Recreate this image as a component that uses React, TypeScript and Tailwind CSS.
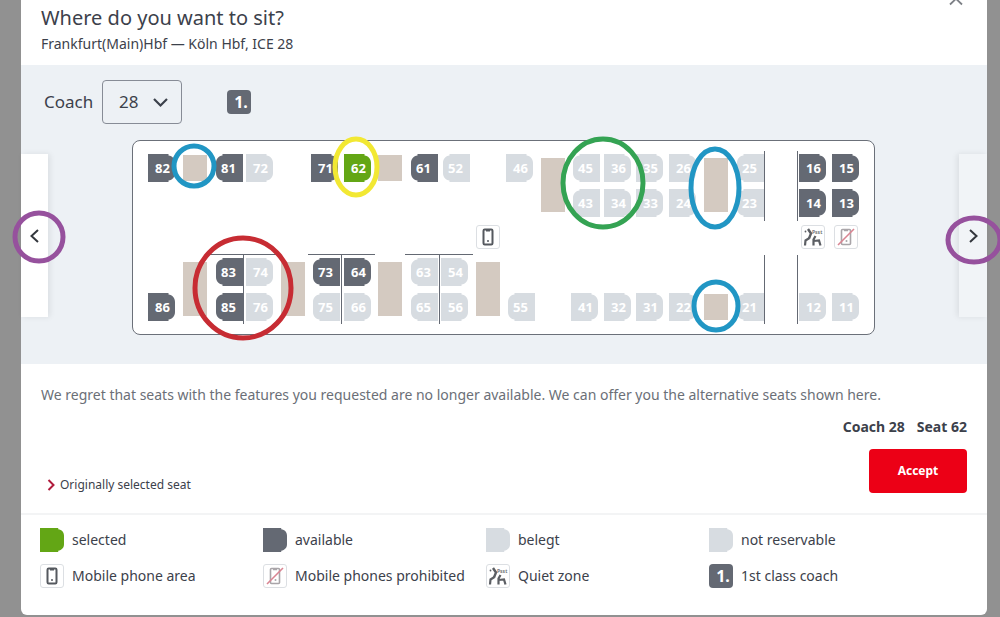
import React from "react";

type Status = "available" | "selected" | "taken";
type Seat = { n: number; x: number; y: number; left?: boolean; status?: Status };

const ROWS = [13, 48, 117, 152];

const seats: Seat[] = [
  { n: 82, x: 15, y: ROWS[0], status: "available" },
  { n: 81, x: 83, y: ROWS[0], left: true, status: "available" },
  { n: 72, x: 113, y: ROWS[0] },
  { n: 71, x: 178, y: ROWS[0], status: "available" },
  { n: 62, x: 211, y: ROWS[0], status: "selected" },
  { n: 61, x: 278, y: ROWS[0], left: true, status: "available" },
  { n: 52, x: 310, y: ROWS[0], left: true },
  { n: 46, x: 373, y: ROWS[0] },
  { n: 45, x: 440, y: ROWS[0], left: true },
  { n: 36, x: 471, y: ROWS[0] },
  { n: 35, x: 503, y: ROWS[0] },
  { n: 26, x: 536, y: ROWS[0] },
  { n: 25, x: 604, y: ROWS[0], left: true },
  { n: 16, x: 666, y: ROWS[0], status: "available" },
  { n: 15, x: 699, y: ROWS[0], status: "available" },
  { n: 43, x: 440, y: ROWS[1], left: true },
  { n: 34, x: 471, y: ROWS[1] },
  { n: 33, x: 503, y: ROWS[1] },
  { n: 24, x: 536, y: ROWS[1] },
  { n: 23, x: 604, y: ROWS[1], left: true },
  { n: 14, x: 666, y: ROWS[1], status: "available" },
  { n: 13, x: 699, y: ROWS[1], status: "available" },
  { n: 83, x: 83, y: ROWS[2], left: true, status: "available" },
  { n: 74, x: 113, y: ROWS[2] },
  { n: 73, x: 180, y: ROWS[2], left: true, status: "available" },
  { n: 64, x: 211, y: ROWS[2], status: "available" },
  { n: 63, x: 278, y: ROWS[2], left: true },
  { n: 54, x: 308, y: ROWS[2] },
  { n: 86, x: 15, y: ROWS[3], status: "available" },
  { n: 85, x: 83, y: ROWS[3], left: true, status: "available" },
  { n: 76, x: 113, y: ROWS[3] },
  { n: 75, x: 180, y: ROWS[3], left: true },
  { n: 66, x: 211, y: ROWS[3] },
  { n: 65, x: 278, y: ROWS[3], left: true },
  { n: 56, x: 308, y: ROWS[3] },
  { n: 55, x: 375, y: ROWS[3], left: true },
  { n: 41, x: 438, y: ROWS[3] },
  { n: 32, x: 471, y: ROWS[3] },
  { n: 31, x: 503, y: ROWS[3] },
  { n: 22, x: 536, y: ROWS[3] },
  { n: 21, x: 604, y: ROWS[3], left: true },
  { n: 12, x: 666, y: ROWS[3] },
  { n: 11, x: 699, y: ROWS[3] },
];

const tables = [
  { x: 50, y: 14, h: 26 },
  { x: 245, y: 14, h: 26 },
  { x: 408, y: 17, h: 54 },
  { x: 571, y: 17, h: 54 },
  { x: 50, y: 121, h: 54 },
  { x: 148, y: 121, h: 54 },
  { x: 245, y: 121, h: 54 },
  { x: 343, y: 121, h: 54 },
  { x: 571, y: 153, h: 26 },
];

const walls = [
  { x: 631, y: 10, w: 1, h: 70 },
  { x: 664, y: 10, w: 1, h: 70 },
  { x: 631, y: 114, w: 1, h: 69 },
  { x: 664, y: 114, w: 1, h: 69 },
  { x: 77, y: 113, w: 67, h: 1 },
  { x: 175, y: 113, w: 67, h: 1 },
  { x: 272, y: 113, w: 68, h: 1 },
  { x: 110, y: 113, w: 1, h: 70 },
  { x: 208, y: 113, w: 1, h: 70 },
  { x: 306, y: 113, w: 1, h: 70 },
];

const rings = [
  { cx: 61, cy: 25, rx: 20, ry: 20, color: "#2196c4" },
  { cx: 223, cy: 26, rx: 21, ry: 28, color: "#f2e833" },
  { cx: 110, cy: 147, rx: 48, ry: 50, color: "#c72c33" },
  { cx: 470, cy: 42, rx: 40, ry: 44, color: "#34a353" },
  { cx: 582, cy: 47, rx: 24, ry: 39, color: "#2196c4" },
  { cx: 583, cy: 165, rx: 22, ry: 24, color: "#2196c4" },
];

const fills: Record<Status, string> = {
  available: "fill-[#646973]",
  selected: "fill-[#63a615]",
  taken: "fill-[#d7dce1]",
};

function SeatShape({ status, left }: { status: Status; left?: boolean }) {
  return (
    <svg viewBox="0 0 27 28" className={`block size-full ${fills[status]}`} preserveAspectRatio="none" aria-hidden="true">
      <path
        transform={left ? "translate(27 0) scale(-1 1)" : undefined}
        d="M0 0H20.500V1.500C24.500 2 27 5 27 9V19C27 23 24.500 26 20.500 26.500V28H0Z"
      />
    </svg>
  );
}

function Tile({ children }: { children: React.ReactNode }) {
  return (
    <span className="flex size-6 shrink-0 items-center justify-center rounded-[3px] border border-[#dcdfe3] bg-white">
      {children}
    </span>
  );
}

function PhoneIcon() {
  return (
    <svg viewBox="0 0 24 24" className="size-6 shrink-0" fill="none" aria-hidden="true">
      <rect x="7.500" y="4.500" width="9" height="15" rx="1.200" stroke="#55595f" strokeWidth="2" />
      <path d="M10 5.500h4" stroke="#55595f" strokeWidth="2" />
      <circle cx="12" cy="16" r="1" fill="#55595f" />
    </svg>
  );
}

function NoPhoneIcon() {
  return (
    <svg viewBox="0 0 24 24" className="size-6 shrink-0" fill="none" aria-hidden="true">
      <rect x="7.500" y="4.500" width="9" height="15" rx="1" stroke="#a9a5a9" strokeWidth="1.600" />
      <path d="M10 5.500h4" stroke="#a9a5a9" strokeWidth="1.500" />
      <circle cx="12.500" cy="16" r="1" fill="#a9a5a9" />
      <path d="M4 20L20 4" stroke="#d98592" strokeWidth="1.600" />
    </svg>
  );
}

function QuietIcon() {
  return (
    <svg viewBox="0 0 24 24" className="size-6 shrink-0" fill="none" stroke="#5c5f64" aria-hidden="true">
      <circle cx="4.500" cy="6.500" r="0.900" fill="#5c5f64" stroke="none" />
      <path d="M7 4L10 8.500L8 13.500" strokeWidth="2.400" />
      <path d="M8.500 13L4.500 15.500L4 20.500" strokeWidth="2.200" />
      <path d="M14.500 11L12.500 14.500V20.500M12.500 16L18 15.500L19.500 20.500" strokeWidth="2.200" />
      <text x="11" y="8.500" fontSize="5" fontWeight="700" fill="#77797d" stroke="none" fontFamily="Noto Sans, sans-serif">
        Psst
      </text>
    </svg>
  );
}

function FirstClass() {
  return (
    <span className="flex size-6 shrink-0 items-center justify-center rounded bg-[#646973] pl-1 text-base font-bold leading-6 text-white">
      1.
    </span>
  );
}

function Ring({ rx, ry, color }: { rx: number; ry: number; color: string }) {
  return (
    <svg width={rx * 2 + 6} height={ry * 2 + 6} fill="none" aria-hidden="true">
      <ellipse cx={rx + 3} cy={ry + 3} rx={rx} ry={ry} stroke={color} strokeWidth="5" />
    </svg>
  );
}

function SeatPlan() {
  return (
    <div className="relative h-[195px] w-[743px] shrink-0 rounded-lg border border-[#6b7079] bg-white">
      {tables.map((t, i) => (
        <span key={i} className="absolute w-6 bg-[#d4cac1]" style={{ left: t.x, top: t.y, height: t.h }} />
      ))}
      {seats.map((s) => (
        <button
          key={s.n}
          type="button"
          disabled={!s.status}
          aria-label={`Seat ${s.n}`}
          className="absolute h-7 w-[27px]"
          style={{ left: s.x, top: s.y }}
        >
          <SeatShape status={s.status ?? "taken"} left={s.left} />
          <span
            className={`absolute inset-0 text-center text-[13px] font-bold leading-7 text-white ${s.left ? "pr-0.5" : "pl-0.5"}`}
          >
            {s.n}
          </span>
        </button>
      ))}
      {walls.map((w, i) => (
        <span key={i} className="absolute bg-[#646973]" style={{ left: w.x, top: w.y, width: w.w, height: w.h }} />
      ))}
      <span className="absolute left-[343px] top-[84px]"><Tile><PhoneIcon /></Tile></span>
      <span className="absolute left-[668px] top-[84px]"><Tile><QuietIcon /></Tile></span>
      <span className="absolute left-[701px] top-[84px]"><Tile><NoPhoneIcon /></Tile></span>
      {rings.map((r, i) => (
        <span key={i} className="pointer-events-none absolute" style={{ left: r.cx - r.rx - 3, top: r.cy - r.ry - 3 }}>
          <Ring rx={r.rx} ry={r.ry} color={r.color} />
        </span>
      ))}
    </div>
  );
}

const legend = [
  { icon: <span className="size-6"><SeatShape status="selected" /></span>, label: "selected" },
  { icon: <span className="size-6"><SeatShape status="available" /></span>, label: "available" },
  { icon: <span className="size-6"><SeatShape status="taken" /></span>, label: "belegt" },
  { icon: <span className="size-6"><SeatShape status="taken" /></span>, label: "not reservable" },
  { icon: <Tile><PhoneIcon /></Tile>, label: "Mobile phone area" },
  { icon: <Tile><NoPhoneIcon /></Tile>, label: "Mobile phones prohibited" },
  { icon: <Tile><QuietIcon /></Tile>, label: "Quiet zone" },
  { icon: <FirstClass />, label: "1st class coach" },
];

export default function App() {
  return (
    <div className="min-h-screen overflow-x-hidden bg-[#919191] pb-0.5 pl-[21px] pr-[13px] font-['Noto_Sans','Open_Sans',sans-serif] text-[#3c414b]">
      <main className="relative rounded-b-md bg-white">
        <button type="button" aria-label="Close" className="absolute -top-2 right-6">
          <svg width="14" height="14" viewBox="0 0 14 14" fill="none" stroke="#7d8086" strokeWidth="1.800" aria-hidden="true">
            <path d="M1 1L13 12.500M13 1L1 12.500" />
          </svg>
        </button>
        <header className="h-[65px] px-5 pt-1">
          <h1 className="text-xl leading-7">Where do you want to sit?</h1>
          <p className="text-sm leading-6">Frankfurt(Main)Hbf — Köln Hbf, ICE 28</p>
        </header>

        <section className="bg-[#edf1f5] pb-[29px] pt-[15px]">
          <div className="flex items-center pl-[23px]">
            <label htmlFor="coach" className="w-[58px] text-[17px]">Coach</label>
            <span className="relative mr-[45px]">
              <select
                id="coach"
                className="block h-11 w-20 appearance-none rounded border border-[#878c96] bg-transparent pl-4 text-[17px]"
              >
                <option>28</option>
              </select>
              <svg className="pointer-events-none absolute right-3.5 top-[17px]" width="15" height="11" viewBox="0 0 15 11" fill="none" stroke="#3c414b" strokeWidth="2.200" aria-hidden="true">
                <path d="M1 2L7.500 8.500L14 2" />
              </svg>
            </span>
            <FirstClass />
          </div>

          <div className="mt-4 flex items-start justify-between">
            <button type="button" aria-label="Previous coach" className="relative mt-3.5 h-[163px] w-[27px] bg-white shadow-[2px_0_6px_rgba(0,0,0,0.08)]">
              <svg className="ml-2" width="12" height="16" viewBox="0 0 12 16" fill="none" stroke="#33373d" strokeWidth="2" aria-hidden="true">
                <path d="M9 2L2.500 8L9 14" />
              </svg>
              <span className="pointer-events-none absolute -left-[9px] top-14">
                <Ring rx={24} ry={24} color="#96519d" />
              </span>
            </button>
            <SeatPlan />
            <button type="button" aria-label="Next coach" className="relative mt-3.5 h-[163px] w-7 bg-[#f1f4f7] shadow-[-2px_0_6px_rgba(0,0,0,0.08)]">
              <svg className="ml-2" width="12" height="16" viewBox="0 0 12 16" fill="none" stroke="#33373d" strokeWidth="2" aria-hidden="true">
                <path d="M3 2L9.500 8L3 14" />
              </svg>
              <span className="pointer-events-none absolute -left-[14px] top-[61px]">
                <Ring rx={26} ry={22} color="#96519d" />
              </span>
            </button>
          </div>
        </section>

        <section className="border-b-2 border-[#f3f4f5] px-5 pb-5 pt-[21px]">
          <p className="text-sm leading-5 text-[#6b6f77]">
            We regret that seats with the features you requested are no longer available. We can offer you the alternative seats shown here.
          </p>
          <div className="mt-3 flex justify-end gap-3 text-sm font-bold leading-5">
            <span>Coach 28</span>
            <span>Seat 62</span>
          </div>
          <div className="mt-3 flex items-end justify-between">
            <a href="#original" className="flex items-center gap-1 pl-1.5 text-xs leading-4">
              <svg width="9" height="12" viewBox="0 0 9 12" fill="none" stroke="#b01c3c" strokeWidth="2" aria-hidden="true">
                <path d="M1.500 1L6.500 6L1.500 11" />
              </svg>
              Originally selected seat
            </a>
            <button type="button" className="h-11 w-[98px] rounded bg-[#ec0016] text-xs font-bold text-white">Accept</button>
          </div>
        </section>

        <ul className="grid grid-cols-4 gap-y-3 pb-[27px] pl-[19px] pr-[55px] pt-[13px] text-sm leading-6">
          {legend.map((l) => (
            <li key={l.label} className="flex items-center gap-2 whitespace-nowrap">
              {l.icon}
              {l.label}
            </li>
          ))}
        </ul>
      </main>
    </div>
  );
}
